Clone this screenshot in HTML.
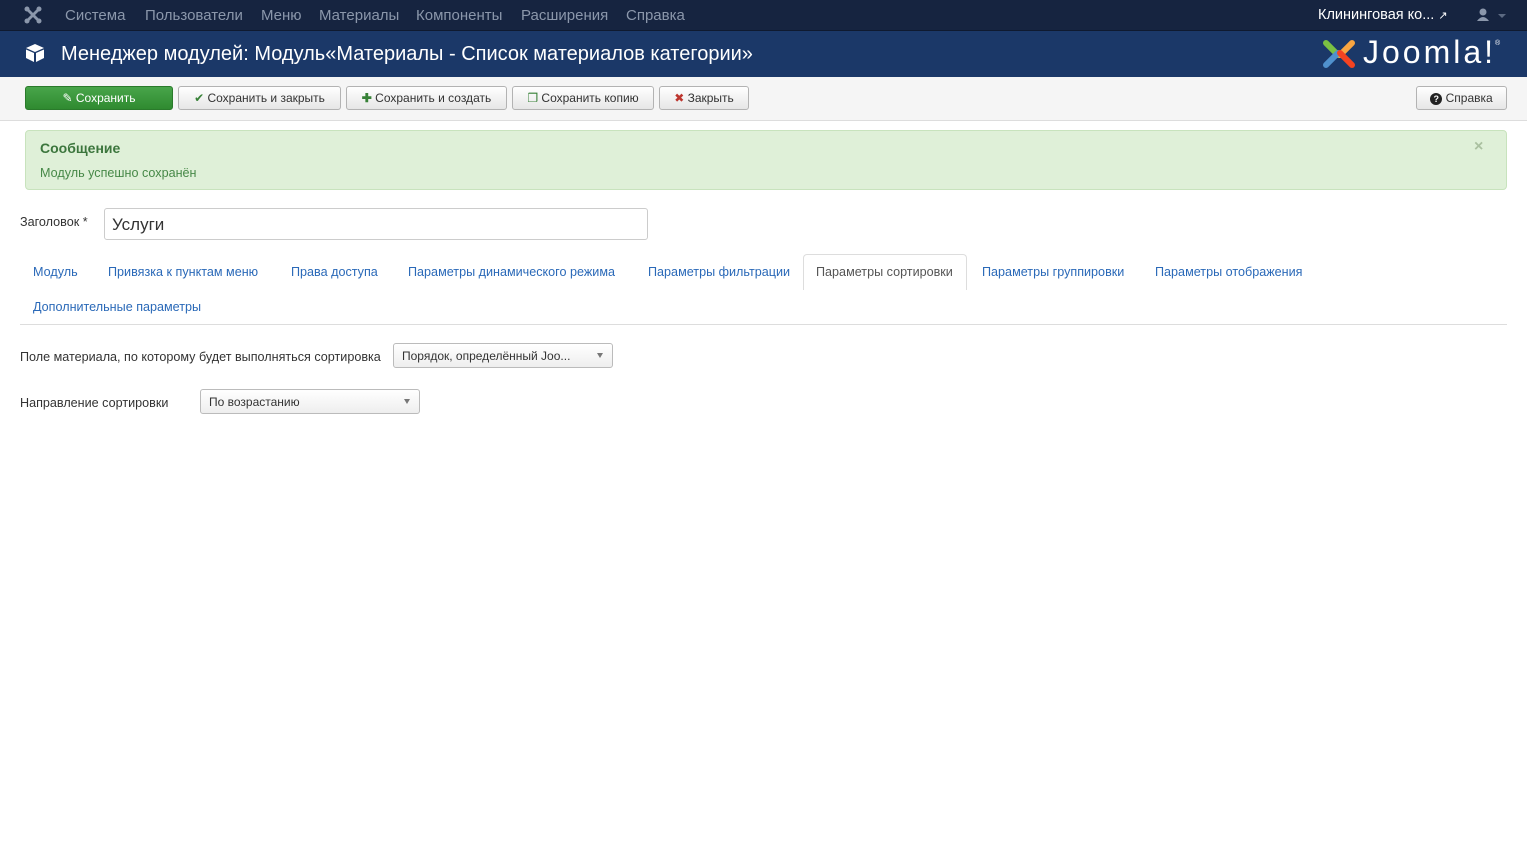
<!DOCTYPE html>
<html><head><meta charset="utf-8"><style>
*{box-sizing:border-box;margin:0;padding:0}
body{width:1527px;height:842px;background:#fff;font-family:"Liberation Sans",Arial,sans-serif;font-size:13px;color:#333;position:relative;overflow:hidden}
.a{position:absolute;white-space:nowrap}
#nav{position:absolute;left:0;top:0;width:1527px;height:31px;background:#162440;border-bottom:1px solid #0f1a30}
#nav .m{top:7px;font-size:15px;color:#8b97ab}
#hdr{position:absolute;left:0;top:31px;width:1527px;height:46px;background:#1b3868}
#tb{position:absolute;left:0;top:77px;width:1527px;height:44px;background:#f5f5f5;border-bottom:1px solid #ddd}
.btn{position:absolute;top:9px;height:24px;border:1px solid #b3b3b3;border-radius:3px;background:linear-gradient(#fff,#e6e6e6);font-size:12px;color:#333;line-height:22px;text-align:center}
.tab{top:265px;font-size:12.6px;color:#2a69b8}
.sel{position:absolute;height:25px;border:1px solid #bbb;border-radius:3px;background:linear-gradient(#fff,#eee);font-size:12px;line-height:25px;padding-left:8px;color:#333}
.sel:after{content:"";position:absolute;right:9px;top:9px;border-left:3.5px solid transparent;border-right:3.5px solid transparent;border-top:5px solid #777}
</style></head><body>
<div id="nav">
<svg class="a" style="left:24px;top:6px" width="18" height="18" viewBox="0 0 18 18"><g fill="#8b97ab"><circle cx="3" cy="3" r="2.5"/><circle cx="15" cy="3" r="2.5"/><circle cx="3" cy="15" r="2.5"/><circle cx="15" cy="15" r="2.5"/><path d="M3 5 L13 15 L15 13 L5 3Z M13 3 L3 13 L5 15 L15 5Z"/></g></svg>
<span class="a m" style="left:65px">Система</span>
<span class="a m" style="left:145px">Пользователи</span>
<span class="a m" style="left:261px">Меню</span>
<span class="a m" style="left:319px">Материалы</span>
<span class="a m" style="left:416px">Компоненты</span>
<span class="a m" style="left:521px">Расширения</span>
<span class="a m" style="left:626px">Справка</span>
<span class="a" style="left:1318px;top:7px;font-size:14.5px;color:#fff">Клининговая ко... <span style="font-size:11px">&#x2197;</span></span>
<svg class="a" style="left:1476px;top:8px" width="30" height="14"><circle cx="7" cy="4" r="3.5" fill="#8b97ab"/><path d="M1 13 Q7 5 13 13Z" fill="#8b97ab"/><path d="M22 6 L30 6 L26 10Z" fill="#5c6a82"/></svg>
</div>
<div id="hdr">
<svg class="a" style="left:25px;top:12px" width="20" height="20" viewBox="0 0 20 20"><path d="M10 1 L19 5 L10 9 L1 5Z" fill="#fff"/><path d="M1 6.5 L9 10 L9 19 L1 15Z" fill="#fff"/><path d="M11 10 L19 6.5 L19 15 L11 19Z" fill="#fff"/></svg>
<span class="a" style="left:61px;top:12px;font-size:20px;color:#fff">Менеджер модулей: Модуль«Материалы - Список материалов категории»</span>
<svg class="a" style="left:1320px;top:4px" width="40" height="38" viewBox="0 0 40 38"><path d="M6 8 L18 20" stroke="#7ac143" stroke-width="6" stroke-linecap="round"/><path d="M32 8 L20 20" stroke="#f9a541" stroke-width="6" stroke-linecap="round"/><path d="M6 30 L18 18" stroke="#5091cd" stroke-width="6" stroke-linecap="round"/><path d="M32 30 L20 18" stroke="#f44321" stroke-width="6" stroke-linecap="round"/></svg>
<span class="a" style="left:1363px;top:3px;font-size:32px;color:#fff;letter-spacing:3px">Joomla!</span><span class="a" style="left:1495px;top:9px;font-size:7px;color:#fff">®</span>
</div>
<div id="tb">
<div class="btn" style="left:25px;width:148px;background:linear-gradient(#48a54a,#2f8a30);border-color:#2a7a2b;color:#fff">&#x270E; Сохранить</div>
<div class="btn" style="left:178px;width:163px"><span style="color:#378137">&#x2714;</span> Сохранить и закрыть</div>
<div class="btn" style="left:346px;width:161px"><span style="color:#378137;font-weight:bold">&#x271A;</span> Сохранить и создать</div>
<div class="btn" style="left:512px;width:142px"><span style="color:#378137">&#x2750;</span> Сохранить копию</div>
<div class="btn" style="left:659px;width:90px"><span style="color:#bd362f">&#x2716;</span> Закрыть</div>
<div class="btn" style="left:1416px;width:91px"><span style="display:inline-block;width:12px;height:12px;border-radius:6px;background:#222;color:#fff;font-size:9px;line-height:12px;text-align:center;font-weight:bold">?</span> Справка</div>
</div>
<div class="a" style="left:25px;top:130px;width:1482px;height:60px;background:#dff0d8;border:1px solid #c8e3bd;border-radius:4px"></div>
<span class="a" style="left:40px;top:140px;font-size:14px;font-weight:bold;color:#3c763d">Сообщение</span>
<span class="a" style="left:40px;top:166px;font-size:12.6px;color:#468847">Модуль успешно сохранён</span>
<span class="a" style="left:1474px;top:138px;font-size:16px;color:#aac0a0;font-weight:bold">×</span>
<span class="a" style="left:20px;top:215px;font-size:12.6px">Заголовок *</span>
<div class="a" style="left:104px;top:208px;width:544px;height:32px;border:1px solid #ccc;border-radius:3px;font-size:17px;padding:6px 7px;color:#333">Услуги</div>
<span class="a tab" style="left:33px">Модуль</span>
<span class="a tab" style="left:108px">Привязка к пунктам меню</span>
<span class="a tab" style="left:291px">Права доступа</span>
<span class="a tab" style="left:408px">Параметры динамического режима</span>
<span class="a tab" style="left:648px">Параметры фильтрации</span>
<div class="a" style="left:803px;top:254px;width:164px;height:36px;border:1px solid #ddd;border-bottom:none;border-radius:4px 4px 0 0;background:#fff"></div>
<span class="a tab" style="left:816px;color:#555">Параметры сортировки</span>
<span class="a tab" style="left:982px">Параметры группировки</span>
<span class="a tab" style="left:1155px">Параметры отображения</span>
<span class="a tab" style="left:33px;top:300px">Дополнительные параметры</span>
<div class="a" style="left:20px;top:324px;width:1487px;height:1px;background:#ddd"></div>
<span class="a" style="left:20px;top:350px;font-size:12.6px">Поле материала, по которому будет выполняться сортировка</span>
<div class="sel" style="left:393px;top:343px;width:220px">Порядок, определённый Joo...</div>
<span class="a" style="left:20px;top:396px;font-size:12.6px">Направление сортировки</span>
<div class="sel" style="left:200px;top:389px;width:220px">По возрастанию</div>
</body></html>
